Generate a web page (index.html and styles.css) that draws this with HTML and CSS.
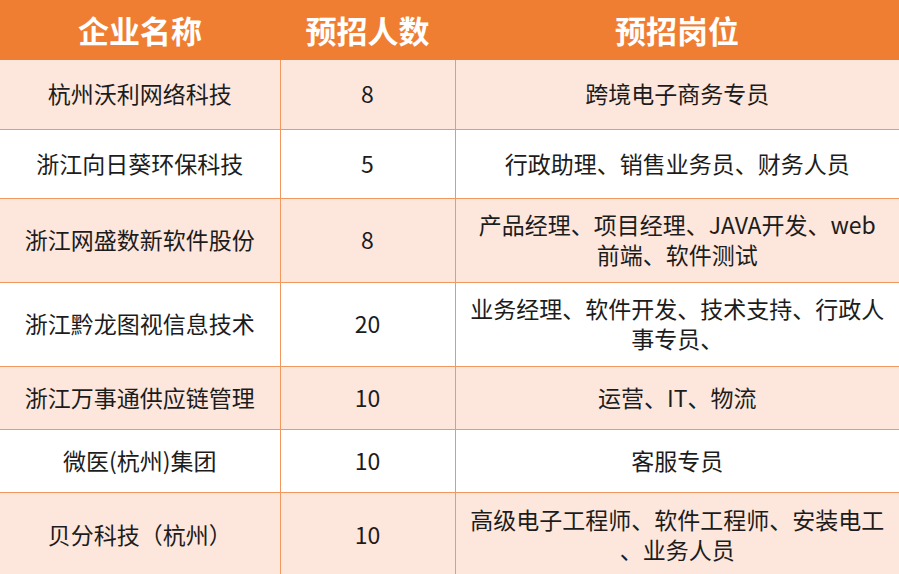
FILE: index.html
```html
<!DOCTYPE html>
<html lang="zh-CN">
<head>
<meta charset="utf-8">
<link rel="stylesheet" href="styles.css">
</head>
<body>
<table class="jobs">
  <colgroup>
    <col class="c1"><col class="c2"><col class="c3">
  </colgroup>
  <thead>
    <tr class="head"><th>企业名称</th><th>预招人数</th><th>预招岗位</th></tr>
  </thead>
  <tbody>
    <tr class="r1 odd"><td>杭州沃利网络科技</td><td class="num">8</td><td>跨境电子商务专员</td></tr>
    <tr class="r2"><td>浙江向日葵环保科技</td><td class="num">5</td><td>行政助理、销售业务员、财务人员</td></tr>
    <tr class="r3 odd"><td>浙江网盛数新软件股份</td><td class="num">8</td><td>产品经理、项目经理、JAVA开发、web<br>前端、软件测试</td></tr>
    <tr class="r4"><td>浙江黔龙图视信息技术</td><td class="num">20</td><td>业务经理、软件开发、技术支持、行政人<br>事专员、</td></tr>
    <tr class="r5 odd"><td>浙江万事通供应链管理</td><td class="num">10</td><td>运营、IT、物流</td></tr>
    <tr class="r6"><td>微医(杭州)集团</td><td class="num">10</td><td>客服专员</td></tr>
    <tr class="r7 odd"><td>贝分科技（杭州）</td><td class="num">10</td><td>高级电子工程师、软件工程师、安装电工<br>、业务人员</td></tr>
  </tbody>
</table>
</body>
</html>
```
FILE: styles.css
```css
html, body {
  margin: 0;
  padding: 0;
  background: #ffffff;
  overflow: hidden;
}
.jobs {
  width: 899px;
  border-collapse: collapse;
  table-layout: fixed;
  font-family: "Noto Sans CJK SC", "Noto Sans", sans-serif;
  color: #1c1c1c;
}
.c1 { width: 280px; }
.c2 { width: 175px; }
.c3 { width: 444px; }
.head th {
  height: 58px;
  padding: 0 0 2px;
  background: #ef7e33;
  color: #ffffff;
  font-size: 31px;
  font-weight: 700;
  text-align: center;
  vertical-align: middle;
  line-height: 1;
}
.jobs td {
  padding: 0 12px 3px;
  font-size: 23px;
  line-height: 30px;
  text-align: center;
  vertical-align: middle;
  border-top: 1px solid #f0985e;
  border-left: 1px solid #f0985e;
}
.jobs td:first-child { border-left: none; }
.jobs tbody tr:first-child td { border-top: none; }
.odd td { background: #fde7dc; }
.num { font-size: 23px; }
.r1 td { height: 66px; }
.r2 td { height: 65px; }
.r3 td { height: 80px; }
.r4 td { height: 80px; }
.r5 td { height: 59px; }
.r6 td { height: 59px; }
.r7 td { height: 81px; }
```
